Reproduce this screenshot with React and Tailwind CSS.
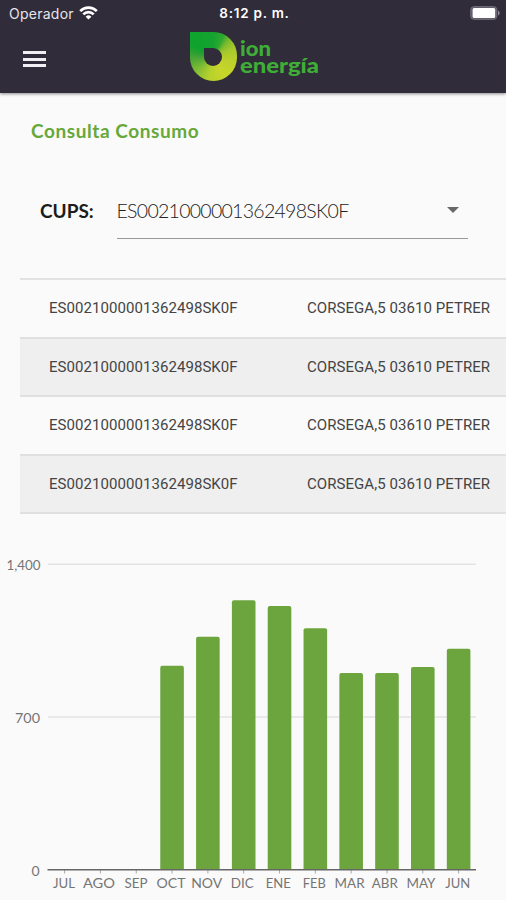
import React from "react";

const rows = [0, 1, 2, 3];

const months = [
  { label: "JUL", x: 64, w: 22, value: 0 },
  { label: "AGO", x: 99, w: 32, value: 0 },
  { label: "SEP", x: 136, w: 23, value: 0 },
  { label: "OCT", x: 171, w: 29, value: 934 },
  { label: "NOV", x: 206.7, w: 31, value: 1067 },
  { label: "DIC", x: 242.3, w: 23, value: 1234 },
  { label: "ENE", x: 278.3, w: 25, value: 1208 },
  { label: "FEB", x: 314.3, w: 23, value: 1106 },
  { label: "MAR", x: 349.6, w: 30, value: 900 },
  { label: "ABR", x: 384.8, w: 26, value: 900 },
  { label: "MAY", x: 421, w: 29, value: 928 },
  { label: "JUN", x: 457.8, w: 25, value: 1012 },
];

function StatusBar() {
  return (
    <div className="flex h-[26px] items-center pl-[9px] pr-[6px] text-white">
      <div className="flex flex-1 items-center gap-[5px]">
        <span className="pt-px font-['Inter',sans-serif] text-[14px] leading-none tracking-[0.25px] text-[#e6e4ea]">Operador</span>
        <svg width="19" height="14" viewBox="0 0 19 14" fill="none" stroke="#fff" strokeWidth="2.7">
          <path d="M1.2 5.1a11.7 11.7 0 0 1 16.6 0" />
          <path d="M4.3 8.4a7.3 7.3 0 0 1 10.4 0" />
          <path d="M9.5 13.6 6.6 10.7a4.1 4.1 0 0 1 5.8 0Z" fill="#fff" stroke="none" />
        </svg>
      </div>
      <span className="pt-[2px] font-['Inter',sans-serif] text-[13.5px] font-semibold leading-none tracking-[0.75px]">8:12 p. m.</span>
      <div className="flex flex-1 justify-end">
        <svg width="30" height="14" viewBox="0 0 30 14">
          <rect x="0.8" y="0.7" width="26" height="12.6" rx="3" fill="#5c5865" stroke="#77737e" />
          <rect x="2.6" y="2" width="22.6" height="10" rx="1.5" fill="#fff" />
          <path d="M28 4.5c2.2.7 2.2 4.3 0 5Z" fill="#8c8992" />
        </svg>
      </div>
    </div>
  );
}

function Logo() {
  return (
    <div className="flex h-[50px] gap-[3px]">
      <div className="flex h-[49px] w-[47px] rounded-[23.5px] rounded-tl-none bg-[conic-gradient(from_0deg_at_50%_52%,#16a330_0deg,#2fa92f_25deg,#7dba2e_42deg,#a6c92c_65deg,#bcd02b_100deg,#c8d62a_150deg,#b5d02d_195deg,#7dbb35_235deg,#4aa535_268deg,#2fa033_282deg,#0ea32e_300deg,#16a330_360deg)] pl-[14px] pt-[16px]">
        <div className="h-[18px] w-[18px] rounded-[9px] rounded-tl-none bg-[#302c3a]" />
      </div>
      <svg width="81" height="50" viewBox="0 0 81 50" fill="#3fae36" fontFamily="Lato, sans-serif" fontWeight="900" fontSize="20">
        <text x="0" y="24" textLength="31" lengthAdjust="spacingAndGlyphs">ion</text>
        <text x="0" y="40.5" textLength="79" lengthAdjust="spacingAndGlyphs">energía</text>
      </svg>
    </div>
  );
}

function Header() {
  return (
    <header className="h-[93px] bg-[#302c3a] shadow-[0_1px_3px_rgba(0,0,0,0.45)]">
      <StatusBar />
      <div className="flex pl-[23px] pt-[6px]">
        <div className="flex w-[167px] flex-col gap-[3.5px] pt-[19px]">
          <span className="h-[3px] w-[23px] bg-[#f0eff2]" />
          <span className="h-[3px] w-[23px] bg-[#f0eff2]" />
          <span className="h-[3px] w-[23px] bg-[#f0eff2]" />
        </div>
        <Logo />
      </div>
    </header>
  );
}

function Chart() {
  return (
    <svg width="506" height="350" viewBox="0 550 506 350" className="block" fontFamily="Lato, sans-serif" fontSize="14" fill="#757575">
      <path d="M48 564.3H476M48 717H476" stroke="#e3e3e3" strokeWidth="1.6" />
      <text x="6.5" y="570" textLength="34" lengthAdjust="spacingAndGlyphs">1,400</text>
      <text x="15" y="722.5" textLength="25" lengthAdjust="spacingAndGlyphs">700</text>
      <text x="31.5" y="875.5">0</text>
      {months.map((m, i) => {
        const cx = 64.6 + i * 35.82;
        const top = 869.5 - (m.value / 1400) * 305.5;
        return (
          <g key={m.label}>
            <path d={`M${cx} 869.5v4`} stroke="#aaa" />
            {m.value > 0 && (
              <path d={`M${cx - 11.8} 869.5V${top + 2}q0-2 2-2h19.6q2 0 2 2V869.5Z`} fill="#6ca53e" />
            )}
            <text x={m.x - m.w / 2} y="888" textLength={m.w} lengthAdjust="spacingAndGlyphs">{m.label}</text>
          </g>
        );
      })}
      <path d="M47.5 869.7H476" stroke="#666" strokeWidth="1.4" />
    </svg>
  );
}

export default function App() {
  return (
    <div className="flex h-[900px] w-[506px] flex-col overflow-hidden bg-[#fafafa]">
      <Header />
      <h1 className="mt-[27px] pl-[31px] font-['Lato',sans-serif] text-[19px] font-bold leading-[22px] tracking-[0.58px] text-[#67a83a]">
        Consulta Consumo
      </h1>
      <div className="mt-[42px] flex h-[55px] pl-10">
        <label className="w-[76.5px] pt-[14px] font-['Lato',sans-serif] text-[19px] font-bold leading-[26px] text-[#1c1c1c]">CUPS:</label>
        <div className="flex w-[351px] justify-between border-b border-[#999] pr-[9px] pt-[14px]">
          <span className="pt-px font-['Lato',sans-serif] text-[19.5px] font-light leading-[24px] tracking-[-0.72px] text-[#222]">ES0021000001362498SK0F</span>
          <svg width="12" height="6" viewBox="0 0 12 6" className="mt-[9px]"><path d="M0 0h12L6 6Z" fill="#686868" /></svg>
        </div>
      </div>
      <div className="ml-5 mt-[39px] flex flex-col border-t-2 border-[#e2e2e2] font-['Roboto',sans-serif] text-[15px] tracking-[0.06px] text-[#444]">
        {rows.map((r) => (
          <div key={r} className="flex h-[58.6px] items-center border-b-2 border-[#e0e0e0] pl-[29px] even:bg-[#efefef]">
            <span className="w-[258px]">ES0021000001362498SK0F</span>
            <span className="whitespace-nowrap">CORSEGA,5 03610 PETRER</span>
          </div>
        ))}
      </div>
      <div className="mt-auto">
        <Chart />
      </div>
    </div>
  );
}
